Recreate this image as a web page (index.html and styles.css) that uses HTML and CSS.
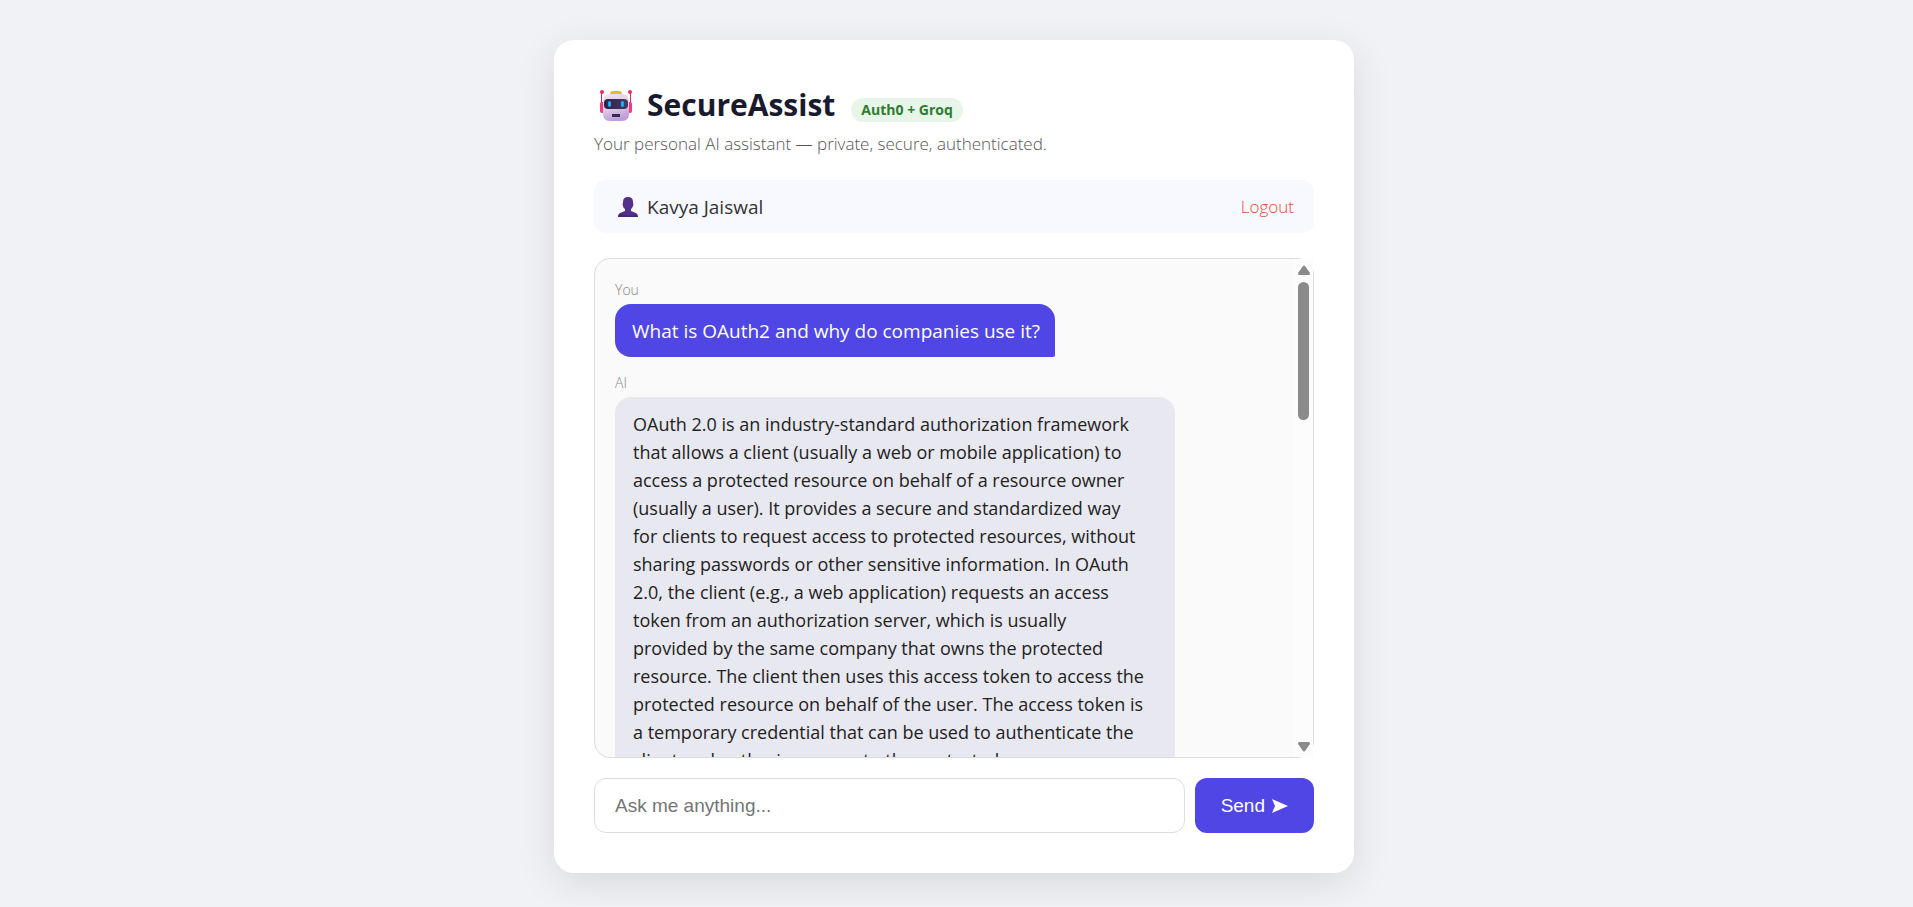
FILE: index.html
```html
<!DOCTYPE html>
<html lang="en">

<head>
    <meta charset="UTF-8">
    <meta name="viewport" content="width=device-width, initial-scale=1.0">
    <title>SecureAssist</title>
    <link rel="stylesheet" href="styles.css">
</head>

<body>
    <main class="card">
        <div class="header">
            <svg class="robot" viewBox="0 0 32 31" aria-hidden="true">
                <defs>
                    <linearGradient id="face" x1="0" y1="0" x2="0.3" y2="1">
                        <stop offset="0" stop-color="#eee4f2" />
                        <stop offset="0.6" stop-color="#dccbe2" />
                        <stop offset="1" stop-color="#bf9ede" />
                    </linearGradient>
                    <linearGradient id="visor" x1="0" y1="0" x2="1" y2="0">
                        <stop offset="0" stop-color="#2c2149" />
                        <stop offset="1" stop-color="#473a68" />
                    </linearGradient>
                </defs>
                <rect x="1" y="2" width="1" height="12" fill="#d8234f" />
                <rect x="30" y="2" width="1" height="12" fill="#d8234f" />
                <circle cx="2" cy="2" r="2" fill="#f02c5c" />
                <circle cx="30" cy="2" r="2" fill="#f02c5c" />
                <rect x="0" y="12" width="5" height="11" rx="2" fill="#f6397e" />
                <rect x="27" y="12" width="5" height="11" rx="2" fill="#f6397e" />
                <path d="M10 4Q10 1 13 1H19Q22 1 22 4Z" fill="#fcb428" />
                <path d="M9 4H23Q29 5 29 11V24Q29 31 22 31H10Q3 31 3 24V11Q3 5 9 4Z" fill="url(#face)" />
                <rect x="4" y="9" width="24" height="10" rx="4" fill="url(#visor)" />
                <ellipse cx="9.5" cy="14" rx="1.7" ry="3" fill="#25a5ee" />
                <ellipse cx="22.5" cy="14" rx="1.7" ry="3" fill="#25a5ee" />
                <rect x="12" y="24" width="8" height="3" fill="#392a51" />
            </svg>
            <h1>SecureAssist</h1>
            <span class="badge">Auth0 + Groq</span>
        </div>
        <p class="subtitle">Your personal AI assistant — private, secure, authenticated.</p>

        <div class="user-bar">
            <svg class="person" viewBox="0 0 20 20" aria-hidden="true">
                <path d="M5 5Q5 0 10 0T15 5V6Q16 7 15 9Q14 12 13 12V14L18 16Q20 17 20 20H0Q0 17 2 16L7 14V12Q5 11 5 9Q4 7 5 6Z" fill="#53318a" />
                <path d="M0 20Q0 18 2 17Q10 20 19 18L20 20Z" fill="#432570" />
            </svg>
            <span class="user-name">Kavya Jaiswal</span>
            <a class="logout" href="#">Logout</a>
        </div>

        <div class="chat-box">
            <div class="messages">
                <div class="label">You</div>
                <div class="message user">What is OAuth2 and why do companies use it?</div>
                <div class="label">AI</div>
                <div class="message ai">OAuth 2.0 is an industry-standard authorization framework
that allows a client (usually a web or mobile application) to
access a protected resource on behalf of a resource owner
(usually a user). It provides a secure and standardized way
for clients to request access to protected resources, without
sharing passwords or other sensitive information. In OAuth
2.0, the client (e.g., a web application) requests an access
token from an authorization server, which is usually
provided by the same company that owns the protected
resource. The client then uses this access token to access the
protected resource on behalf of the user. The access token is
a temporary credential that can be used to authenticate the
client and authorize access to the protected
resource.</div>
            </div>
            <div class="scrollbar" aria-hidden="true">
                <svg class="arrow" viewBox="0 0 12 10"><path d="M5 1Q6 0 7 1L12 8Q12 10 11 10H1Q0 10 0 8Z" fill="#8b8b8b" /></svg>
                <div class="thumb"></div>
                <svg class="arrow" viewBox="0 0 12 10"><path d="M5 9Q6 10 7 9L12 2Q12 0 11 0H1Q0 0 0 2Z" fill="#8b8b8b" /></svg>
            </div>
        </div>

        <form class="input-row">
            <input type="text" placeholder="Ask me anything..." aria-label="Ask me anything">
            <button type="submit">Send
                <svg class="send-icon" viewBox="0 0 16 14" aria-hidden="true"><path d="M0 0L16 7L0 14L3 7Z" fill="#fff" /></svg>
            </button>
        </form>
    </main>

    <script>
        document.querySelector('.input-row').addEventListener('submit', function (e) {
            e.preventDefault();
        });
    </script>
</body>

</html>
```
FILE: styles.css
```css
:root {
    --primary-color: #4f46e5;
    --bg-color: #f0f2f5;
    --border-color: #dddddd;
}

* {
    box-sizing: border-box;
}

body {
    font-family: 'Segoe UI', 'Open Sans', sans-serif;
    background-color: var(--bg-color);
    margin: 0;
    padding: 40px 25px 32px 20px;
}

.card {
    max-width: 800px;
    margin: 0 auto;
    padding: 40px;
    background-color: white;
    border-radius: 20px;
    box-shadow: 0 10px 40px rgba(0, 0, 0, 0.1);
}

.header {
    display: flex;
    align-items: center;
    height: 50px;
}

.robot {
    width: 32px;
    height: 31px;
    margin: 0 15px 0 6px;
}

h1 {
    margin: 0;
    font-size: 30px;
    line-height: 50px;
    color: #1a1a2e;
}

.badge {
    margin: 10px 0 0 16px;
    padding: 0 10px;
    border-radius: 12px;
    background-color: #e8f5e9;
    color: #2e7d32;
    font-size: 14px;
    font-weight: bold;
    line-height: 24px;
}

.subtitle {
    margin: 0 0 22px;
    color: #555;
    font-size: 17px;
    font-weight: 300;
    line-height: 28px;
}

.user-bar {
    display: flex;
    align-items: center;
    margin-bottom: 25px;
    padding: 13px 20px 12px 24px;
    border-radius: 12px;
    background-color: #f8f9ff;
    line-height: 28px;
}

.person {
    width: 20px;
    height: 20px;
    margin-right: 9px;
}

.user-name {
    color: #333;
    font-size: 19px;
    font-weight: 500;
}

.logout {
    margin-left: auto;
    color: #e74c3c;
    font-size: 17px;
    font-weight: 300;
    text-decoration: none;
}

.chat-box {
    display: flex;
    height: 500px;
    margin-bottom: 20px;
    border: 1px solid var(--border-color);
    border-radius: 16px;
    background-color: #fafafa;
}

.messages {
    flex: 1;
    padding: 20px;
    overflow: hidden;
    border-radius: 16px 0 0 16px;
}

.label {
    margin-bottom: 4px;
    color: #888;
    font-size: 14px;
    font-weight: 300;
    line-height: 21px;
}

.message {
    width: fit-content;
    max-width: 85%;
    margin-bottom: 15px;
    line-height: 28px;
}

.user {
    padding: 13px 15px 12px 17px;
    border-radius: 16px 16px 2px 16px;
    background-color: var(--primary-color);
    color: white;
    font-size: 19px;
}

.ai {
    width: 85%;
    padding: 13px 18px 12px;
    border-radius: 16px 16px 16px 2px;
    background-color: #e8e8f0;
    color: #222;
    font-size: 18px;
    white-space: pre-line;
}

.scrollbar {
    display: flex;
    flex-direction: column;
    align-items: center;
    width: 19px;
    padding: 6px 0 5px;
    background-color: #fcfcfc;
}

.arrow {
    width: 12px;
    height: 10px;
}

.thumb {
    width: 11px;
    height: 138px;
    margin: 7px 0 auto;
    border-radius: 6px;
    background-color: #8b8b8b;
}

.input-row {
    display: flex;
    gap: 10px;
}

input {
    flex: 1;
    min-width: 0;
    height: 55px;
    padding: 0 20px;
    border: 1px solid var(--border-color);
    border-radius: 12px;
    font-family: 'Liberation Sans', Arial, sans-serif;
    font-size: 19px;
}

input::placeholder {
    color: #757575;
}

button {
    display: flex;
    align-items: center;
    gap: 7px;
    padding: 0 26px;
    border: none;
    border-radius: 12px;
    background-color: var(--primary-color);
    color: white;
    font-family: 'Liberation Sans', Arial, sans-serif;
    font-size: 19px;
    cursor: pointer;
}

.send-icon {
    width: 16px;
    height: 14px;
}
```
